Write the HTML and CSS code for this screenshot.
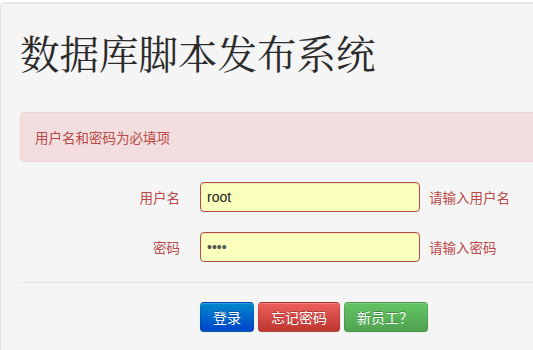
FILE: index.html
```html
<!DOCTYPE html>
<html lang="zh-CN">
<head>
<meta charset="utf-8">
<title>数据库脚本发布系统</title>
<link rel="stylesheet" href="styles.css">
</head>
<body>
<div class="well">
  <h1 class="title">数据库脚本发布系统</h1>
  <div class="alert">用户名和密码为必填项</div>
  <form class="form">
    <div class="group">
      <label class="label" for="u">用户名</label>
      <div class="controls">
        <input class="input" id="u" type="text" value="root">
        <span class="help">请输入用户名</span>
      </div>
    </div>
    <div class="group">
      <label class="label" for="p">密码</label>
      <div class="controls">
        <input class="input" id="p" type="password" value="1234">
        <span class="help">请输入密码</span>
      </div>
    </div>
    <div class="actions">
      <button type="button" class="btn btn-primary">登录</button>
      <button type="button" class="btn btn-danger">忘记密码</button>
      <button type="button" class="btn btn-success">新员工？</button>
    </div>
  </form>
</div>
</body>
</html>
```
FILE: styles.css
```css
html, body {
  margin: 0;
  padding: 0;
  overflow: hidden;
  background: #ffffff;
}
body {
  padding-top: 2px;
  font-family: "Liberation Sans", Arial, "Noto Sans CJK SC", sans-serif;
  font-size: 14px;
  line-height: 20px;
  color: #333333;
}
.well {
  width: 900px;
  padding: 19px;
  background: #f5f5f5;
  border: 1px solid #e3e3e3;
  border-radius: 4px;
  box-shadow: inset 0 1px 1px rgba(0,0,0,0.05);
}
.title {
  margin: 10px 0 40px;
  font-family: "Noto Serif CJK SC", "Liberation Serif", "Noto Sans CJK SC", serif;
  font-weight: normal;
  font-size: 39.5px;
  line-height: 40px;
  color: #2b2b2b;
}
.alert {
  padding: 14px 35px 14px 14px;
  background: #f2dede;
  border: 1px solid #eed3d7;
  border-radius: 4px;
  color: #b94a48;
  font-family: "Noto Sans CJK SC", sans-serif;
  font-size: 13.5px;
  line-height: 20px;
  margin-bottom: 20px;
}
.form {
  margin: 0;
}
.group {
  display: flex;
  align-items: flex-start;
  margin-bottom: 20px;
}
.label {
  width: 160px;
  padding-top: 5px;
  text-align: right;
  color: #b94a48;
  font-family: "Noto Sans CJK SC", sans-serif;
  font-size: 13.5px;
}
.controls {
  margin-left: 20px;
  display: flex;
  align-items: center;
}
.input {
  box-sizing: border-box;
  width: 220px;
  height: 30px;
  padding: 4px 6px;
  margin: 0;
  font-family: "Liberation Sans", Arial, sans-serif;
  font-size: 14px;
  line-height: 20px;
  color: #555555;
  background: #faffbd;
  border: 1px solid #b94a48;
  border-radius: 4px;
  box-shadow: inset 0 1px 1px rgba(0,0,0,0.075);
  outline: none;
}
#u { color: #222222; }
.help {
  padding-left: 9px;
  color: #b94a48;
  font-family: "Noto Sans CJK SC", sans-serif;
  font-size: 13.5px;
}
.actions {
  padding: 19px 0 20px 180px;
  border-top: 1px solid #e5e5e5;
  display: flex;
  gap: 4px;
}
.btn {
  box-sizing: border-box;
  height: 30px;
  padding: 4px 12px;
  font-family: "Noto Sans CJK SC", sans-serif;
  font-size: 14px;
  line-height: 20px;
  color: #ffffff;
  text-shadow: 0 -1px 0 rgba(0,0,0,0.25);
  border: 1px solid rgba(0,0,0,0.1);
  border-bottom-color: rgba(0,0,0,0.25);
  border-radius: 4px;
  box-shadow: inset 0 1px 0 rgba(255,255,255,0.2), 0 1px 2px rgba(0,0,0,0.05);
  cursor: pointer;
}
.btn-primary {
  background: linear-gradient(#0088cc, #0044cc);
}
.btn-danger {
  background: linear-gradient(#ee5f5b, #bd362f);
}
.btn-success {
  background: linear-gradient(#62c462, #51a351);
  padding-right: 14px;
}
```
